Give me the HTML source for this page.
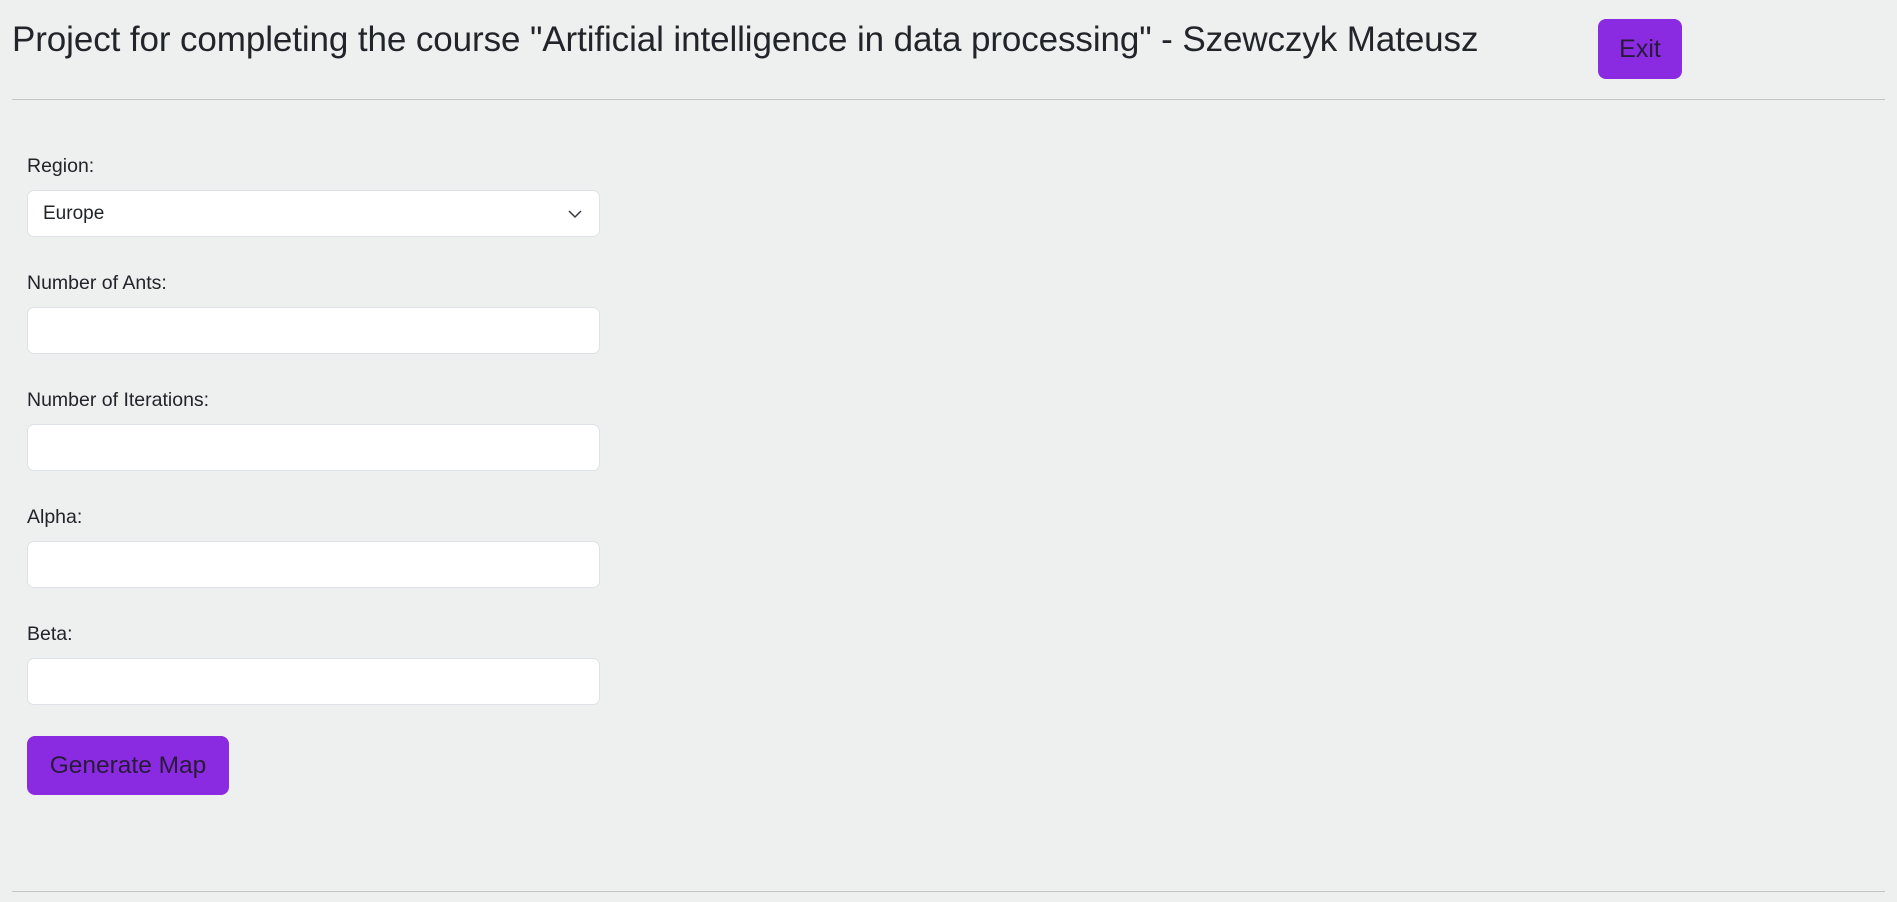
<!DOCTYPE html>
<html><head><meta charset="utf-8"><style>
body{margin:0;width:1897px;height:902px;background:#eef0ef;font-family:"Liberation Sans",Arial,sans-serif;color:#212529;position:relative;overflow:hidden}
.a{position:absolute}
h1{position:absolute;left:12px;top:20px;margin:0;font-size:35px;font-weight:400;line-height:40px;white-space:nowrap;letter-spacing:-0.1px}
.btn{position:absolute;background:#8a2be2;border-radius:8px;color:#2a1a3a;display:flex;align-items:center;justify-content:center}
.hr{position:absolute;left:12px;width:1873px;height:1px;background:#c4c4c4}
label{position:absolute;left:27px;font-size:19.5px;line-height:20px}
.in{position:absolute;left:27px;width:571px;height:45px;background:#fff;border:1px solid #dee2e6;border-radius:7px}
</style></head><body>
<h1>Project for completing the course "Artificial intelligence in data processing" - Szewczyk Mateusz</h1>
<div class="btn" style="left:1598px;top:19px;width:84px;height:60px;font-size:25px">Exit</div>
<div class="hr" style="top:99px"></div>
<label style="top:156px">Region:</label>
<div class="in" style="top:190px"><span class="a" style="left:15px;top:12px;font-size:19px">Europe</span>
<svg class="a" style="left:539px;top:17px" width="16" height="12" viewBox="0 0 16 12"><path d="M2 3l6 6 6-6" fill="none" stroke="#343a40" stroke-width="1.5"/></svg></div>
<label style="top:273px">Number of Ants:</label>
<div class="in" style="top:307px"></div>
<label style="top:390px">Number of Iterations:</label>
<div class="in" style="top:424px"></div>
<label style="top:507px">Alpha:</label>
<div class="in" style="top:541px"></div>
<label style="top:624px">Beta:</label>
<div class="in" style="top:658px"></div>
<div class="btn" style="left:27px;top:736px;width:202px;height:59px;font-size:24.5px">Generate Map</div>
<div class="hr" style="top:891px"></div>
</body></html>
